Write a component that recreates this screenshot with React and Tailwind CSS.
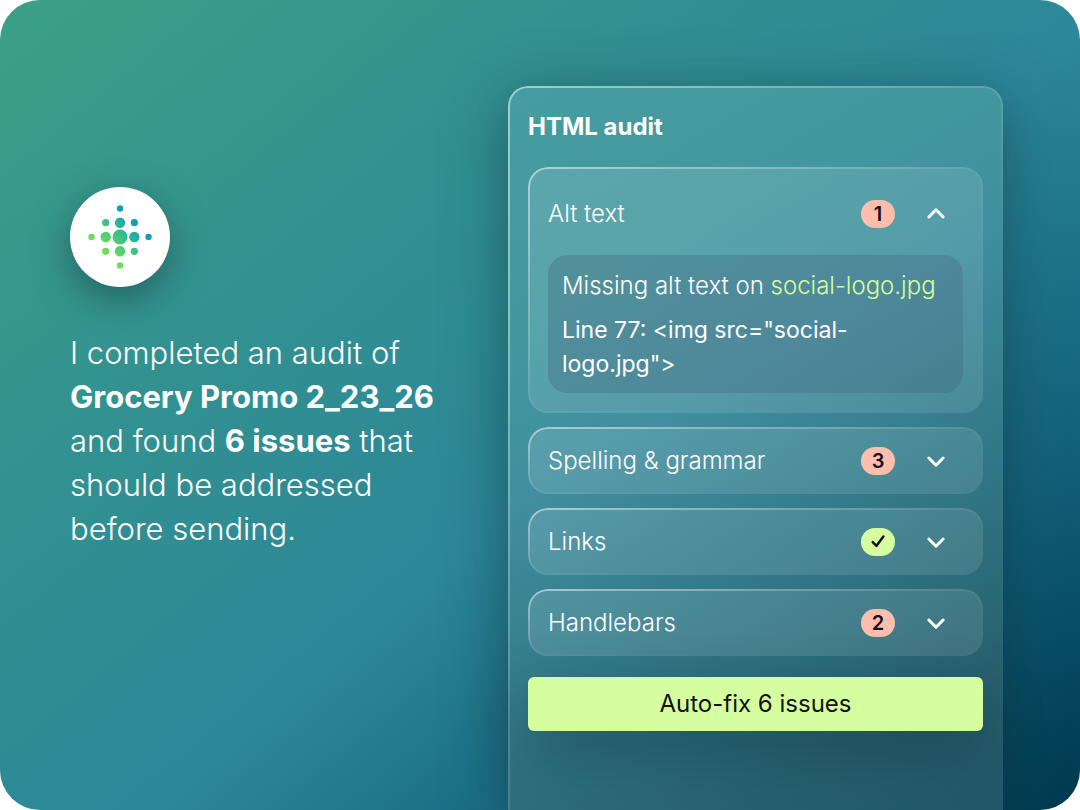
import React, { useState } from 'react';
import { clsx } from 'clsx';

const audits = [
  {
    id: 'alt',
    label: 'Alt text',
    issues: 1,
    detail: { message: 'Missing alt text on', file: 'social-logo.jpg', code: 'Line 77: <img src="social-logo.jpg">' },
  },
  { id: 'spelling', label: 'Spelling & grammar', issues: 3 },
  { id: 'links', label: 'Links', issues: 0 },
  { id: 'handlebars', label: 'Handlebars', issues: 2 },
];

const dots = [
  [50, 21.5, 3.2], [35.7, 35.7, 3.6], [50, 35.7, 5.2], [64.3, 35.7, 3.6],
  [21.5, 50, 3.2], [35.7, 50, 5.2], [50, 50, 7.5], [64.3, 50, 5.2], [78.5, 50, 3.2],
  [35.7, 64.3, 3.6], [50, 64.3, 5.2], [64.3, 64.3, 3.6], [50, 78.5, 3.2],
];

// Thin rim that fades from the top left corner
const rim =
  "relative before:pointer-events-none before:absolute before:inset-0 before:rounded-[20px] before:p-[2px] before:content-[''] before:[mask:linear-gradient(#000_0_0)_content-box_exclude,linear-gradient(#000_0_0)]";

function Logo() {
  return (
    <div className="size-[100px] rounded-full bg-white shadow-[0_12px_36px_rgba(20,50,60,0.5)]">
      <svg viewBox="0 0 100 100" className="size-full" aria-hidden="true">
        <defs>
          <linearGradient id="dots" gradientUnits="userSpaceOnUse" x1="33" y1="67" x2="67" y2="33">
            <stop offset="0" stopColor="#7be055" />
            <stop offset="0.5" stopColor="#3dc383" />
            <stop offset="0.75" stopColor="#1fadaa" />
            <stop offset="1" stopColor="#0c98be" />
          </linearGradient>
        </defs>
        {dots.map(([cx, cy, r]) => (
          <circle key={`${cx}-${cy}`} cx={cx} cy={cy} r={r} fill="url(#dots)" />
        ))}
      </svg>
    </div>
  );
}

function Badge({ issues }) {
  return (
    <span
      className={clsx(
        'flex h-7 w-[34px] items-center justify-center rounded-full text-xl font-semibold leading-7 text-[#180f26]',
        issues > 0 ? 'bg-[#ffbeab]' : 'bg-[#d5ff9e]'
      )}
    >
      {issues > 0 ? issues : (
        <svg viewBox="0 0 16 16" className="size-4" fill="none" stroke="currentColor" strokeWidth="2.5" strokeLinecap="round" strokeLinejoin="round" aria-label="No issues">
          <path d="M2.7 8.2 L6.5 11.8 L13.4 2.6" />
        </svg>
      )}
    </span>
  );
}

function AuditCard({ audit, open, onToggle }) {
  const { label, issues, detail } = audit;
  const expanded = open && detail;

  return (
    <section
      className={clsx(
        rim,
        'rounded-[20px] bg-[linear-gradient(135deg,rgba(255,255,255,0.12),rgba(255,255,255,0.1))] px-5 before:bg-[linear-gradient(to_bottom_right,rgba(255,255,255,0.5),rgba(255,255,255,0.06)_50%,rgba(255,255,255,0.01)_70%)]',
        expanded && 'pt-[14px] pb-5'
      )}
    >
      <button
        type="button"
        aria-expanded={Boolean(expanded)}
        onClick={onToggle}
        className={clsx('flex w-full items-center pr-[18px] text-left', expanded ? 'h-[74px] pb-2' : 'h-[67px]')}
      >
        <span className="flex-1 text-2xl font-light">{label}</span>
        <Badge issues={issues} />
        <svg viewBox="0 0 18 18" className={clsx('ml-8 size-[18px]', expanded && 'rotate-180')} fill="none" stroke="currentColor" strokeWidth="3" strokeLinecap="round" strokeLinejoin="round" aria-hidden="true">
          <path d="M1.9 6 L9 13.2 L16.1 6" />
        </svg>
      </button>
      {expanded && (
        <div className="rounded-[20px] bg-[rgba(64,96,124,0.3)] px-[14px] pt-[14px] pb-3 leading-[34px]">
          <p className="text-2xl leading-[34px] font-light">
            {detail.message} <a href="#social-logo" className="text-[#d5ff9e]">{detail.file}</a>
          </p>
          <code className="mt-[10px] block font-['Inter',sans-serif] text-[23px]">{detail.code}</code>
        </div>
      )}
    </section>
  );
}

export default function App() {
  const [openId, setOpenId] = useState('alt');

  return (
    <main className="flex min-h-screen justify-between overflow-hidden rounded-[40px] bg-[linear-gradient(140deg,#3ca085_0%,#319091_33%,#2c8799_55%,#12607a_79%,#003c53_98%)] pr-[77px] pl-[70px] font-['Inter',sans-serif] text-white">
      <div className="w-[380px] pt-[187px]">
        <Logo />
        <p className="mt-11 text-[31px] leading-[44px] font-light">
          I completed an audit of <strong className="font-bold whitespace-nowrap">Grocery Promo 2_23_26</strong> and found{' '}
          <strong className="font-bold">6 issues</strong> that should be addressed before sending.
        </p>
      </div>

      <div className="flex w-[495px] pt-[86px]">
        <div
          className={clsx(
            rim,
            'w-full rounded-t-[20px] bg-[linear-gradient(150deg,#469c9f_0%,#43989f_25%,#408e9f_42%,#347c8b_60%,#28616f_85%,#225768_100%)] px-5 pt-5 pb-12 shadow-[0_12px_60px_rgba(16,50,56,0.55)] before:rounded-b-none before:pb-0 before:bg-[linear-gradient(to_bottom_right,rgba(255,255,255,0.5),rgba(255,255,255,0.12)_50%,rgba(255,255,255,0.01)_60%)]'
          )}
        >
          <h1 className="mb-5 text-2xl leading-[41px] font-bold">HTML audit</h1>
          <div className="space-y-[14px]">
            {audits.map((audit) => (
              <AuditCard
                key={audit.id}
                audit={audit}
                open={openId === audit.id}
                onToggle={() => setOpenId(openId === audit.id ? null : audit.id)}
              />
            ))}
          </div>
          <button
            type="button"
            className="relative mt-[21px] h-[54px] w-full rounded-md bg-[#d5ff9e] text-2xl text-[#111118] shadow-[0_24px_60px_rgba(10,35,50,0.35)]"
          >
            Auto-fix 6 issues
          </button>
        </div>
      </div>
    </main>
  );
}
